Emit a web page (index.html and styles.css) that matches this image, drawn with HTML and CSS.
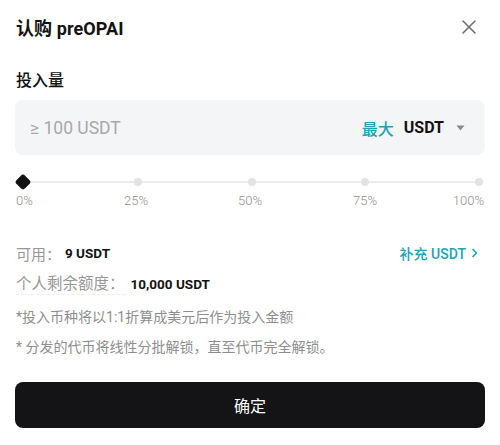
FILE: index.html
```html
<!DOCTYPE html>
<html lang="zh">
<head>
<meta charset="utf-8">
<link rel="stylesheet" href="styles.css">
</head>
<body>
<div class="sheet">
  <div class="header">
    <div class="title">认购 preOPAI</div>
    <svg class="close" width="16" height="16" viewBox="0 0 16 16"><path d="M2 2 L14 14 M14 2 L2 14" stroke="#6f6f6f" stroke-width="1.6" stroke-linecap="round" fill="none"/></svg>
  </div>
  <div class="label">投入量</div>
  <div class="input">
    <span class="placeholder">≥ 100 USDT</span>
    <span class="right">
      <span class="max">最大</span>
      <span class="cur">USDT</span>
      <svg class="caret" width="9" height="6" viewBox="0 0 9 6"><path d="M0.5 0.5 H8.5 L4.5 5.5 Z" fill="#8a8a8a"/></svg>
    </span>
  </div>
  <div class="slider">
    <div class="track"></div>
    <div class="dots">
      <span class="knob"></span>
      <span class="dot"></span>
      <span class="dot"></span>
      <span class="dot"></span>
      <span class="dot"></span>
    </div>
  </div>
  <div class="marks">
    <span>0%</span><span>25%</span><span>50%</span><span>75%</span><span>100%</span>
  </div>
  <div class="row row-avail">
    <span class="k">可用：</span><span class="v">9 USDT</span>
    <span class="link">补充 USDT
      <svg width="8" height="10" viewBox="0 0 8 10"><path d="M2 1.5 L5.5 5 L2 8.5" stroke="#1ba3b6" stroke-width="1.6" fill="none" stroke-linecap="round" stroke-linejoin="round"/></svg>
    </span>
  </div>
  <div class="row row-quota">
    <span class="k dashed">个人剩余额度：</span><span class="v">10,000 USDT</span>
  </div>
  <div class="note n1">*投入币种将以1:1折算成美元后作为投入金额</div>
  <div class="note n2">* 分发的代币将线性分批解锁，直至代币完全解锁。</div>
  <button class="confirm">确定</button>
</div>
</body>
</html>
```

FILE: styles.css
```css
* { box-sizing: border-box; }
html, body { margin: 0; padding: 0; background: #fff; }
body {
  font-family: Roboto, "Noto Sans CJK SC", "Noto Sans", sans-serif;
  color: #121212;
  width: 500px;
  height: 445px;
  overflow: hidden;
}
.sheet { padding: 0 15px 0 15px; }
.header {
  height: 54px;
  display: flex;
  align-items: center;
  justify-content: space-between;
  padding-left: 1px;
  padding-right: 8px;
}
.title { font-size: 18px; font-weight: 700; letter-spacing: 0.1px; }
.close { display: block; }
.label {
  margin-top: 16px;
  height: 22px;
  line-height: 22px;
  font-size: 16px;
  font-weight: 500;
  padding-left: 1px;
}
.input {
  margin-top: 8px;
  height: 55px;
  background: #f4f5f7;
  border-radius: 8px;
  display: flex;
  align-items: center;
  justify-content: space-between;
  padding: 0 20px 0 15px;
}
.placeholder { font-size: 17.5px; color: #a8a8a8; }
.right { display: flex; align-items: center; }
.max { color: #1ba3b6; font-size: 16px; font-weight: 500; margin-right: 10px; }
.cur { font-size: 16px; font-weight: 700; margin-right: 12px; }
.caret { display: block; }
.slider {
  position: relative;
  margin-top: 20px;
  height: 14px;
  padding: 0 2px 0 1px;
}
.track {
  position: absolute;
  left: 7px;
  right: 6px;
  top: 6px;
  height: 2px;
  background: #ececec;
}
.dots {
  position: relative;
  height: 14px;
  display: flex;
  align-items: center;
  justify-content: space-between;
}
.dot {
  width: 8px;
  height: 8px;
  border-radius: 50%;
  background: #e3e3e3;
}
.knob {
  width: 10px;
  height: 10px;
  margin-left: 2px;
  background: #111;
  border-radius: 2px;
  transform: rotate(45deg);
  box-shadow: 0 0 0 1px #111;
}
.marks {
  margin-top: 4px;
  height: 16px;
  line-height: 16px;
  display: grid;
  grid-template-columns: 64px 114px 114px 116px 62px;
  font-size: 13px;
  font-weight: 300;
  color: #8f8f8f;
  text-align: center;
}
.marks span:first-child { text-align: left; padding-left: 1px; }
.marks span:last-child { text-align: right; padding-right: 1px; }
.row {
  height: 22px;
  display: flex;
  align-items: center;
  padding-left: 1px;
}
.row-avail { margin-top: 33px; }
.row-quota { margin-top: 9px; }
.k { font-size: 15px; color: #979797; }
.row-quota .k { font-size: 15.5px; }
.dashed { border-bottom: 1px dashed #ececec; line-height: 20px; }
.v { font-size: 13.5px; font-weight: 700; margin-left: 4px; }
.row-quota .v { margin-left: 6px; }
.link {
  margin-left: auto;
  margin-right: 6px;
  color: #1ba3b6;
  font-size: 14px;
  font-weight: 500;
  display: flex;
  align-items: center;
  gap: 5px;
}
.link svg { display: block; }
.note {
  font-size: 14px;
  color: #8e8e8e;
  height: 20px;
  line-height: 20px;
  padding-left: 1px;
}
.n1 { margin-top: 12px; }
.n2 { margin-top: 10px; }
.confirm {
  display: block;
  width: 470px;
  margin-top: 25px;
  height: 46px;
  border: 0;
  border-radius: 8px;
  background: #141416;
  color: #fff;
  font-family: Roboto, "Noto Sans CJK SC", sans-serif;
  font-size: 16px;
  font-weight: 400;
}
```
